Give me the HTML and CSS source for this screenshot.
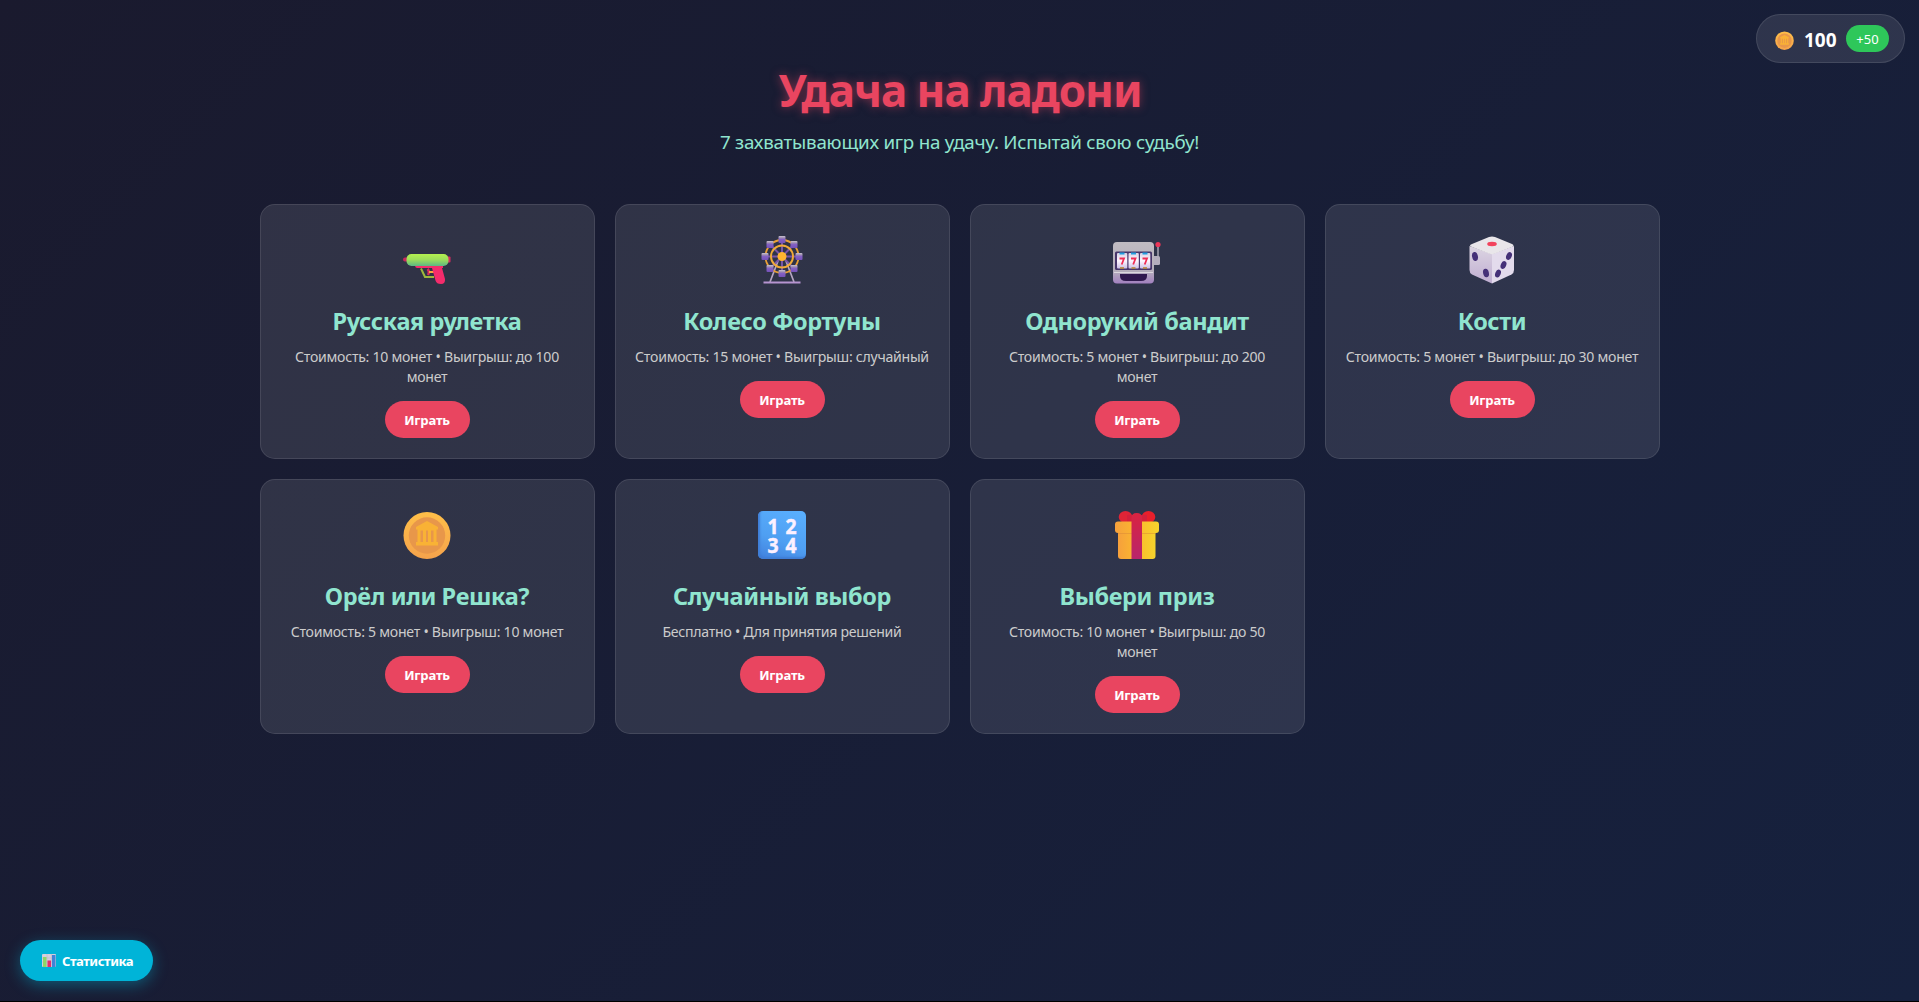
FILE: index.html
```html
<!DOCTYPE html>
<html lang="ru">
<head>
<meta charset="UTF-8">
<title>Удача на ладони</title>
<link rel="stylesheet" href="styles.css">
</head>
<body>
<svg class="defs" width="0" height="0" aria-hidden="true">
  <defs>
    <linearGradient id="green" x2="0" y2="1"><stop offset="0" stop-color="#b4f04f"/><stop offset=".5" stop-color="#9bdc5c"/><stop offset="1" stop-color="#5cb883"/></linearGradient>
    <linearGradient id="lilac" x2="0" y2="1"><stop offset="0" stop-color="#c9c2cf"/><stop offset=".3" stop-color="#9b88b0"/><stop offset=".45" stop-color="#8562c4"/><stop offset="1" stop-color="#7551b8"/></linearGradient>
    <linearGradient id="metal" x2="0" y2="1"><stop offset="0" stop-color="#c0bcc2"/><stop offset=".7" stop-color="#b5aebb"/><stop offset="1" stop-color="#a280c0"/></linearGradient>
    <linearGradient id="reel" x2="0" y2="1"><stop offset="0" stop-color="#d8d2e4"/><stop offset=".5" stop-color="#fff6ff"/><stop offset="1" stop-color="#cdbfe6"/></linearGradient>
    <linearGradient id="dieL" x2="0" y2="1"><stop offset="0" stop-color="#dcd5e2"/><stop offset="1" stop-color="#c0aed2"/></linearGradient>
    <linearGradient id="gold" x2="0" y2="1"><stop offset="0" stop-color="#ffbf48"/><stop offset="1" stop-color="#f5a34c"/></linearGradient>
    <linearGradient id="blue" x1="1" x2="0" y2="1"><stop offset="0" stop-color="#55aaff"/><stop offset=".6" stop-color="#4f9ff2"/><stop offset="1" stop-color="#4180dc"/></linearGradient>
    <linearGradient id="box"><stop offset="0" stop-color="#f6a03c"/><stop offset=".5" stop-color="#fbb92e"/><stop offset="1" stop-color="#f6d42c"/></linearGradient>
    <linearGradient id="ribbon" x2="0" y2="1"><stop offset="0" stop-color="#d92440"/><stop offset="1" stop-color="#b8246c"/></linearGradient>
    <symbol id="coin" viewBox="0 0 48 48">
      <circle cx="24" cy="24.500" r="23.500" fill="url(#gold)"/>
      <circle cx="24" cy="24.500" r="18.200" fill="#e8974a"/>
      <path d="M24 10 35 16V18.500H33.500V31H35V34.500H13V31H14.500V18.500H13V16ZM17.500 19.500V31H20V19.500ZM23 19.500V31H25V19.500ZM28 19.500V31H30.500V19.500Z" fill="#f9b235" fill-rule="evenodd"/>
    </symbol>
  </defs>
</svg>

<div class="balance">
  <svg class="balance-coin"><use href="#coin"/></svg>
  <span class="balance-value">100</span>
  <button class="bonus">+50</button>
</div>

<main class="container">
  <header class="header">
    <h1 class="title">Удача на ладони</h1>
    <p class="subtitle">7 захватывающих игр на удачу. Испытай свою судьбу!</p>
  </header>
  <section class="games">
    <article class="card">
      <svg class="icon" viewBox="0 -3.500 48 48">
        <path d="M18 29 22 37.500H31" fill="none" stroke="#a0b83c" stroke-width="2"/>
        <path d="M24.500 29.500Q27 32 25 35.500" fill="none" stroke="#dd2b5d" stroke-width="2.500"/><path d="M26 32.500H31" stroke="#f5a83c" stroke-width="2"/>
        <path d="M12 26H40V28.500H39L42 39.500Q42.500 44.500 38 44.500 33.500 44.500 32.500 41L29 28.500H14Q12 28 12 26Z" fill="#f42c6c"/>
        <rect x="0" y="18" width="6" height="4" rx="2" fill="#c8285c"/><rect x="43" y="17" width="4.500" height="6" rx="1" fill="#d92a62"/>
        <rect x="3.500" y="14.500" width="42" height="12" rx="5" fill="url(#green)"/>
      </svg>
      <h2 class="name">Русская рулетка</h2>
      <p class="info">Стоимость: 10 монет • Выигрыш: до 100<br>монет</p>
      <button class="play">Играть</button>
    </article>
    <article class="card">
      <svg class="icon" viewBox="0 0 48 48">
        <path d="M20 25 12 46M28 25 36 46" stroke="#b6a6c2" stroke-width="1.700"/>
        <path d="M5.500 46.500H42.500" stroke="#b694d0" stroke-width="2"/>
        <path d="M24 5V36M8.500 20.500H39.500M13 9.500 35 31.500M35 9.500 13 31.500" stroke="#7955a8" stroke-width="2"/>
        <circle cx="24" cy="20.500" r="16.500" fill="none" stroke="#e9a035" stroke-width="1.800"/>
        <circle cx="24" cy="20.500" r="11" fill="none" stroke="#f1aa38" stroke-width="1.900"/>
        <circle cx="24" cy="20.500" r="4.500" fill="#ffb52f"/>
        <g fill="url(#lilac)"><rect x="20.500" y="0" width="7" height="7" rx="1"/><rect x="8.500" y="5" width="7" height="7" rx="1"/><rect x="32.500" y="5" width="7" height="7" rx="1"/><rect x="3.500" y="17" width="7" height="7" rx="1"/><rect x="37.500" y="17" width="7" height="7" rx="1"/><rect x="8.500" y="29" width="7" height="7" rx="1"/><rect x="32.500" y="29" width="7" height="7" rx="1"/><rect x="20.500" y="34" width="7" height="7" rx="1"/></g>
      </svg>
      <h2 class="name">Колесо Фортуны</h2>
      <p class="info">Стоимость: 15 монет • Выигрыш: случайный</p>
      <button class="play">Играть</button>
    </article>
    <article class="card">
      <svg class="icon" viewBox="0 0 48 48">
        <path d="M45 9V22" stroke="#a9a6b5" stroke-width="1.500"/><circle cx="45" cy="8.500" r="2.600" fill="#ec3658"/>
        <rect x="38" y="20" width="9" height="9" rx="1.500" fill="#b4aebd"/>
        <rect x="0" y="6" width="41" height="41.500" rx="4" fill="url(#metal)"/>
        <path d="M1 36.500H40" stroke="#dcd8de" stroke-width="1"/>
        <rect x="2" y="15.500" width="37" height="18.500" rx="1.500" fill="#48366b"/>
        <g fill="url(#reel)"><rect x="4" y="17" width="10.300" height="15.500" rx="1"/><rect x="15.500" y="17" width="10.300" height="15.500" rx="1"/><rect x="27" y="17" width="10.300" height="15.500" rx="1"/></g>
        <path d="M6.500 17.500H11.500M18 17.500H23M29.500 17.500H34.500" stroke="#229ee0" stroke-width="2"/><path d="M7 32H11M18.500 32H22.500M30 32H34" stroke="#b8842e" stroke-width="1.500"/>
        <path d="M6.500 22.500H11L8.700 28.500M18 22.500H22.500L20.200 28.500M29.500 22.500H34L31.700 28.500" fill="none" stroke="#f02d55" stroke-width="1.800"/>
        <path d="M7 38H34V40Q34 45 28 45H13Q7 45 7 40Z" fill="#30194e"/>
      </svg>
      <h2 class="name">Однорукий бандит</h2>
      <p class="info">Стоимость: 5 монет • Выигрыш: до 200<br>монет</p>
      <button class="play">Играть</button>
    </article>
    <article class="card">
      <svg class="icon" viewBox="0 0 48 48">
        <path d="M1.500 10 24 18V47.500L4 38.500Q1.500 37 1.500 34Z" fill="url(#dieL)"/>
        <path d="M46 10 24 18V47.500L43.500 38.500Q46 37 46 34Z" fill="#e3dbec"/>
        <path d="M21 1Q24 0 27 1L44 8Q47 9.500 44 11L27 17.500Q24 19 21 17.500L4 11Q0 9.500 4 8Z" fill="#e9e6ea"/>
        <ellipse cx="24" cy="8" rx="4.800" ry="2.200" fill="#f2435d"/>
        <g fill="#453078"><ellipse cx="7" cy="20.500" rx="2.900" ry="4.500" transform="rotate(-12 7 20.500)"/><ellipse cx="18" cy="37" rx="2.900" ry="4.300" transform="rotate(-12 18 37)"/><ellipse cx="41" cy="20" rx="2.700" ry="4.100" transform="rotate(22 41 20)"/><ellipse cx="35.500" cy="29" rx="2.700" ry="4.100" transform="rotate(22 35.500 29)"/><ellipse cx="30" cy="37.500" rx="2.700" ry="4.100" transform="rotate(22 30 37.500)"/></g>
      </svg>
      <h2 class="name">Кости</h2>
      <p class="info">Стоимость: 5 монет • Выигрыш: до 30 монет</p>
      <button class="play">Играть</button>
    </article>
    <article class="card">
      <svg class="icon"><use href="#coin"/></svg>
      <h2 class="name">Орёл или Решка?</h2>
      <p class="info">Стоимость: 5 монет • Выигрыш: 10 монет</p>
      <button class="play">Играть</button>
    </article>
    <article class="card">
      <div class="icon numbers"><span>1</span><span>2</span><span>3</span><span>4</span></div>
      <h2 class="name">Случайный выбор</h2>
      <p class="info">Бесплатно • Для принятия решений</p>
      <button class="play">Играть</button>
    </article>
    <article class="card">
      <svg class="icon" viewBox="0 0 48 48">
        <ellipse cx="12.500" cy="6" rx="6.800" ry="6" fill="#df2436"/><ellipse cx="35.500" cy="6" rx="6.800" ry="6" fill="#e8202c"/><path d="M14 4Q20 3 24 6 28 3 34 4V12H14Z" fill="#d3203b"/>
        <rect x="5" y="17" width="37.500" height="31" rx="3" fill="url(#box)"/>
        <path d="M5 21.500H42.500V23H5Z" fill="#d98a35" opacity=".5"/>
        <rect x="2" y="10.500" width="44" height="11.500" rx="3" fill="url(#box)"/>
        <path d="M18.500 48V7Q18.500 2 23.700 2 29 2 29 7V48Z" fill="url(#ribbon)"/>
      </svg>
      <h2 class="name">Выбери приз</h2>
      <p class="info">Стоимость: 10 монет • Выигрыш: до 50<br>монет</p>
      <button class="play">Играть</button>
    </article>
  </section>
</main>

<button class="stats">
  <svg class="stats-icon" viewBox="0 0 14 13"><rect width="14" height="13" rx="1" fill="#d3cfdc"/><path d="M5 0V13M9.500 0V13M0 4H14M0 8H14" stroke="#b9b2c6" stroke-width=".5"/><rect x="1" y="3" width="3.500" height="10" fill="#8ed668"/><rect x="5.500" y="6.500" width="3.500" height="6.500" fill="#e42e6b"/><rect x="10" y="1" width="3.500" height="12" fill="#3f83d8"/></svg>
  <span>Статистика</span>
</button>
</body>
</html>
```
FILE: styles.css
```css
* { box-sizing: border-box; margin: 0; padding: 0; }
html { background: #000; }
body {
  position: relative;
  height: 1001px;
  overflow: hidden;
  font-family: "Noto Sans", sans-serif;
  color: #fff;
  background: linear-gradient(135deg, #1a1a2e 0%, #16213e 100%);
}
button { border: 0; color: #fff; font-family: inherit; }
.defs { position: absolute; }
.container { width: 1400px; margin: 0 auto; padding-top: 60px; }
.header { height: 144px; text-align: center; }
.title { font-size: 44px; line-height: 60px; font-weight: 700; letter-spacing: -1px; text-indent: 1px; color: #e94560; text-shadow: 0 0 10px rgba(233, 69, 96, .5); }
.subtitle { margin-top: 9px; font-size: 18.8px; line-height: 26px; letter-spacing: -.24px; color: #90e5cf; }
.games { display: grid; grid-template-columns: repeat(4, minmax(0, 1fr)); grid-auto-rows: 255px; gap: 20px; }
.card {
  display: flex; flex-direction: column; align-items: center;
  padding: 31px 15px 20px;
  text-align: center;
  background: rgba(255, 255, 255, .1);
  border: 1px solid rgba(255, 255, 255, .1);
  border-radius: 15px;
}
.icon { width: 48px; height: 48px; flex: none; }
.numbers {
  display: grid; grid-template-columns: 18px 18px; grid-auto-rows: 19px;
  justify-content: center; align-content: center;
  border-radius: 5px;
  background: linear-gradient(200deg, #5ab0ff, #4f9ff2 60%, #4180dc);
  box-shadow: inset 2px -2px 2px #3f7dd6;
  color: #fdf0ff; font-size: 22px; line-height: 19px; font-weight: 700;
  -webkit-text-stroke: .5px #fdf0ff;
}
.numbers span { transform: scaleX(.88); }
.name { margin-top: 21px; font-size: 23.5px; line-height: 32px; font-weight: 700; letter-spacing: -.37px; color: #90e5cf; white-space: nowrap; }
.info { margin-top: 10px; font-size: 14.1px; line-height: 20px; letter-spacing: -.26px; color: #ccc; white-space: nowrap; }
.play { width: 85px; height: 37px; flex: none; margin-top: 14px; padding-top: 1px; border-radius: 25px; font-size: 13.1px; font-weight: 700; letter-spacing: -.2px; background: #e94560; }
.balance {
  position: absolute; top: 14px; right: 14px;
  display: flex; align-items: center;
  width: 149px; height: 49px; padding: 0 15px 0 18px;
  background: rgba(255, 255, 255, .1);
  border: 1px solid rgba(255, 255, 255, .1);
  border-radius: 25px;
}
.balance-coin { width: 19px; height: 19px; margin-top: 3px; }
.balance-value { margin: 3px 0 0 10px; font-size: 19px; font-weight: 700; }
.bonus { width: 43px; height: 27px; margin-left: auto; border-radius: 15px; font-size: 13px; background: #2ec75a; }
.stats {
  position: absolute; left: 20px; top: 940px;
  display: flex; align-items: center; gap: 6px;
  width: 133px; height: 41px; padding-left: 22px;
  border-radius: 25px;
  font-size: 13.1px; font-weight: 700; letter-spacing: -.5px;
  background: #00b4d8;
  box-shadow: 0 4px 15px rgba(0, 180, 216, .4);
}
.stats-icon { width: 14px; height: 13px; }
```
